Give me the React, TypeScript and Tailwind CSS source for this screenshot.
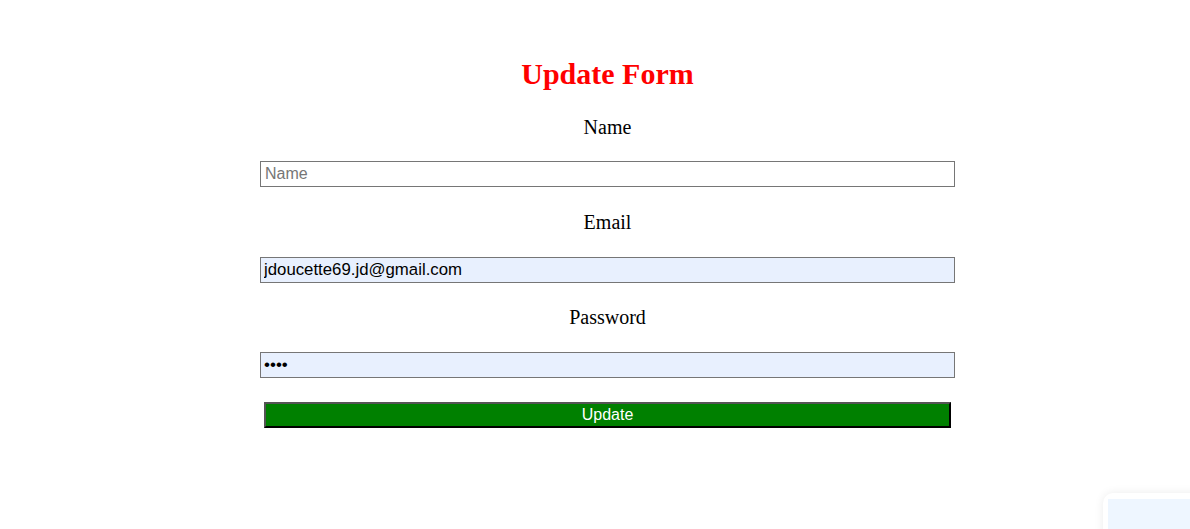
import React from "react";

export default function App() {
  return (
    <div className="relative w-[1190px] h-[529px] bg-white overflow-hidden">
      <div className="ml-[260px] w-[695px] pt-[56px] flex flex-col">
        <h1 className="text-center text-[30px] leading-[35px] font-bold text-[#ff0000] font-['Liberation_Serif',serif]">
          Update Form
        </h1>
        <div className="mt-[25px] text-center text-[20px] leading-[23px] text-black font-['Liberation_Serif',serif]">
          Name
        </div>
        <input
          className="mt-[22px] h-[26px] border border-[#767676] px-[4px] text-[16px] font-['Liberation_Sans',Arial,sans-serif] text-black placeholder:text-[#767676] outline-none"
          placeholder="Name"
        />
        <div className="mt-[24px] text-center text-[20px] leading-[23px] text-black font-['Liberation_Serif',serif]">
          Email
        </div>
        <input
          className="mt-[23px] h-[26px] border border-[#767676] bg-[#e8f0fe] px-[3px] text-[16.8px] font-['Liberation_Sans',Arial,sans-serif] text-black outline-none"
          defaultValue="jdoucette69.jd@gmail.com"
        />
        <div className="mt-[23px] text-center text-[20px] leading-[23px] text-black font-['Liberation_Serif',serif]">
          Password
        </div>
        <input
          type="password"
          className="mt-[23px] h-[26px] border border-[#767676] bg-[#e8f0fe] px-[3px] text-[17px] font-['Liberation_Sans',Arial,sans-serif] text-black outline-none"
          defaultValue="1234"
        />
        <button className="mt-[24px] mx-[4px] h-[26px] bg-[#008000] border-2 border-t-[#555555] border-l-[#555555] border-b-black border-r-black text-white text-[16px] leading-[20px] font-['Liberation_Sans',Arial,sans-serif]">
          Update
        </button>
      </div>
      <div className="absolute left-[1103px] top-[493px] w-[120px] h-[80px] rounded-[10px] bg-white shadow-[0_0_10px_rgba(0,0,0,0.08)] pl-[5px] pt-[6px]">
        <div className="w-full h-full bg-[#eef6ff]" />
      </div>
    </div>
  );
}
